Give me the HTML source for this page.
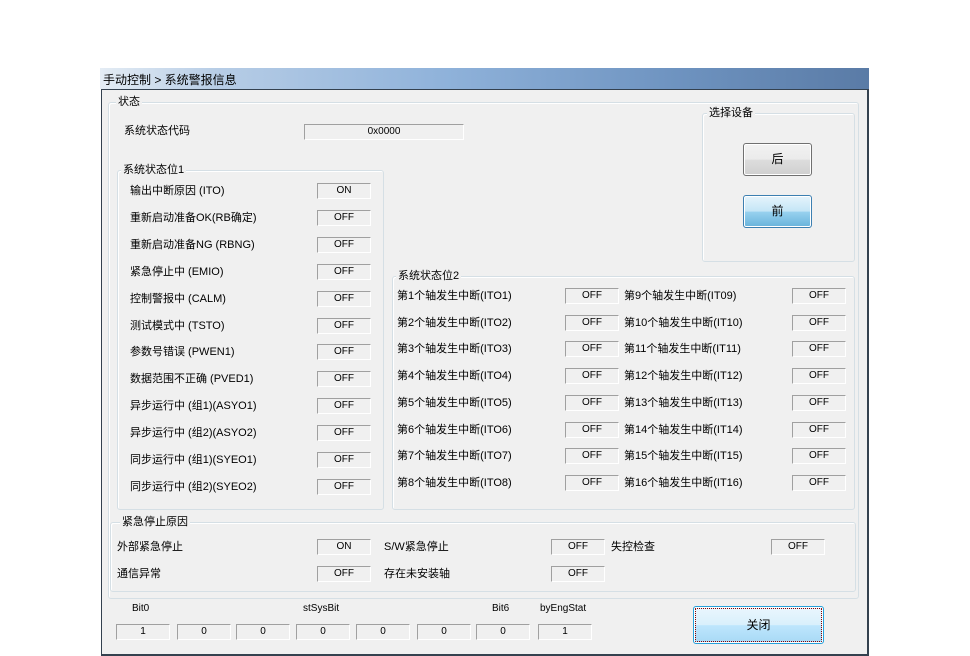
<!DOCTYPE html>
<html><head><meta charset="utf-8"><style>
body{margin:0;width:970px;height:656px;background:#fff;position:relative;overflow:hidden;font-family:"Liberation Sans","Noto Sans CJK SC",sans-serif;font-size:11px;color:#000}
.a{position:absolute}
#title{left:100px;top:68px;width:769px;height:21px;background:linear-gradient(90deg,#e4ecf4 0%,#b7cde6 15%,#8fb2da 45%,#6e93c0 75%,#5a7ba6 100%);}
#title span{position:absolute;left:3px;top:3px;font-size:12px;color:#000}
#win{left:101px;top:89px;width:765px;height:564px;background:#f0f0f0;border:1px solid #34414f;border-width:1px 2px 2px 1px}
.g{position:absolute;border:1px solid #d5dfe5;border-radius:3px;box-shadow:inset 1px 1px 0 #fff}
.gl{position:absolute;background:#f0f0f0;padding:0 2px;font-size:11px;line-height:12px;white-space:nowrap}
.t{position:absolute;white-space:nowrap;line-height:12px}
.b{position:absolute;width:52px;height:14px;border:1px solid #a0a0a0;border-right-color:#fff;border-bottom-color:#fff;text-align:center;line-height:14px;font-size:10px;background:#f0f0f0}
.btn{position:absolute;border:1px solid #707070;border-radius:3px;text-align:center;font-size:12px;box-shadow:0 0 0 1px #fff inset}
</style></head><body>
<div id="title" class="a"><span>手动控制 &gt; 系统警报信息</span></div>
<div id="win" class="a"></div>

<div class="g" style="left:108px;top:102px;width:749px;height:495px"></div>
<div class="gl" style="left:116px;top:96px">状态</div>
<div class="t" style="left:124px;top:125px">系统状态代码</div>
<div class="b" style="left:304px;top:124px;width:158px">0x0000</div>

<div class="g" style="left:702px;top:113px;width:151px;height:147px"></div>
<div class="gl" style="left:707px;top:107px">选择设备</div>
<div class="btn" style="left:743px;top:143px;width:67px;height:31px;line-height:31px;background:linear-gradient(#f2f2f2 0%,#ebebeb 50%,#dddddd 51%,#cfcfcf 100%)">后</div>
<div class="btn" style="left:743px;top:195px;width:67px;height:31px;line-height:31px;border-color:#3c7fb1;background:linear-gradient(#e5f4fc 0%,#c4e5f6 50%,#98d1ef 51%,#68b3db 100%)">前</div>

<div class="g" style="left:117px;top:170px;width:265px;height:338px"></div>
<div class="gl" style="left:121px;top:164px">系统状态位1</div>

<div class="g" style="left:392px;top:276px;width:461px;height:232px"></div>
<div class="gl" style="left:396px;top:270px">系统状态位2</div>

<div class="g" style="left:110px;top:522px;width:744px;height:68px"></div>
<div class="gl" style="left:120px;top:516px">紧急停止原因</div>

<div id="rows"></div>
<script>
var h='';
var l1=['输出中断原因 (ITO)','重新启动准备OK(RB确定)','重新启动准备NG (RBNG)','紧急停止中 (EMIO)','控制警报中 (CALM)','测试模式中 (TSTO)','参数号错误  (PWEN1)','数据范围不正确  (PVED1)','异步运行中 (组1)(ASYO1)','异步运行中 (组2)(ASYO2)','同步运行中 (组1)(SYEO1)','同步运行中 (组2)(SYEO2)'];
for(var i=0;i<12;i++){var y=183+i*26.9;h+='<div class="t" style="left:130px;top:'+(y+2)+'px">'+l1[i]+'</div><div class="b" style="left:317px;top:'+y+'px">'+(i==0?'ON':'OFF')+'</div>';}
for(var i=0;i<8;i++){var y=288+i*26.7;var n=i+1,m=i+9;
h+='<div class="t" style="left:397px;top:'+(y+2)+'px">第'+n+'个轴发生中断(ITO'+n+')</div><div class="b" style="left:565px;top:'+y+'px">OFF</div>';
h+='<div class="t" style="left:624px;top:'+(y+2)+'px">第'+m+'个轴发生中断(IT'+(m<10?'0':'')+m+')</div><div class="b" style="left:792px;top:'+y+'px">OFF</div>';}
h+='<div class="t" style="left:117px;top:541px">外部紧急停止</div><div class="b" style="left:317px;top:539px">ON</div>';
h+='<div class="t" style="left:384px;top:541px">S/W紧急停止</div><div class="b" style="left:551px;top:539px">OFF</div>';
h+='<div class="t" style="left:611px;top:541px">失控检查</div><div class="b" style="left:771px;top:539px">OFF</div>';
h+='<div class="t" style="left:117px;top:568px">通信异常</div><div class="b" style="left:317px;top:566px">OFF</div>';
h+='<div class="t" style="left:384px;top:568px">存在未安装轴</div><div class="b" style="left:551px;top:566px">OFF</div>';
var bx=[116,177,236,296,356,417,476,538],bv=['1','0','0','0','0','0','0','1'];
for(var i=0;i<8;i++)h+='<div class="b" style="left:'+bx[i]+'px;top:624px">'+bv[i]+'</div>';
h+='<div class="t" style="left:132px;top:603px;font-size:10px">Bit0</div><div class="t" style="left:303px;top:603px;font-size:10px">stSysBit</div><div class="t" style="left:492px;top:603px;font-size:10px">Bit6</div><div class="t" style="left:540px;top:603px;font-size:10px">byEngStat</div>';
document.getElementById('rows').innerHTML=h;
</script>
<div class="btn" style="left:693px;top:606px;width:129px;height:36px;line-height:36px;border-color:#26a0da;background:linear-gradient(#eaf6fd 0%,#d9f0fc 50%,#bee6fd 51%,#a7d9f5 100%);outline:1px dotted #800;outline-offset:-3px">关闭</div>
</body></html>
